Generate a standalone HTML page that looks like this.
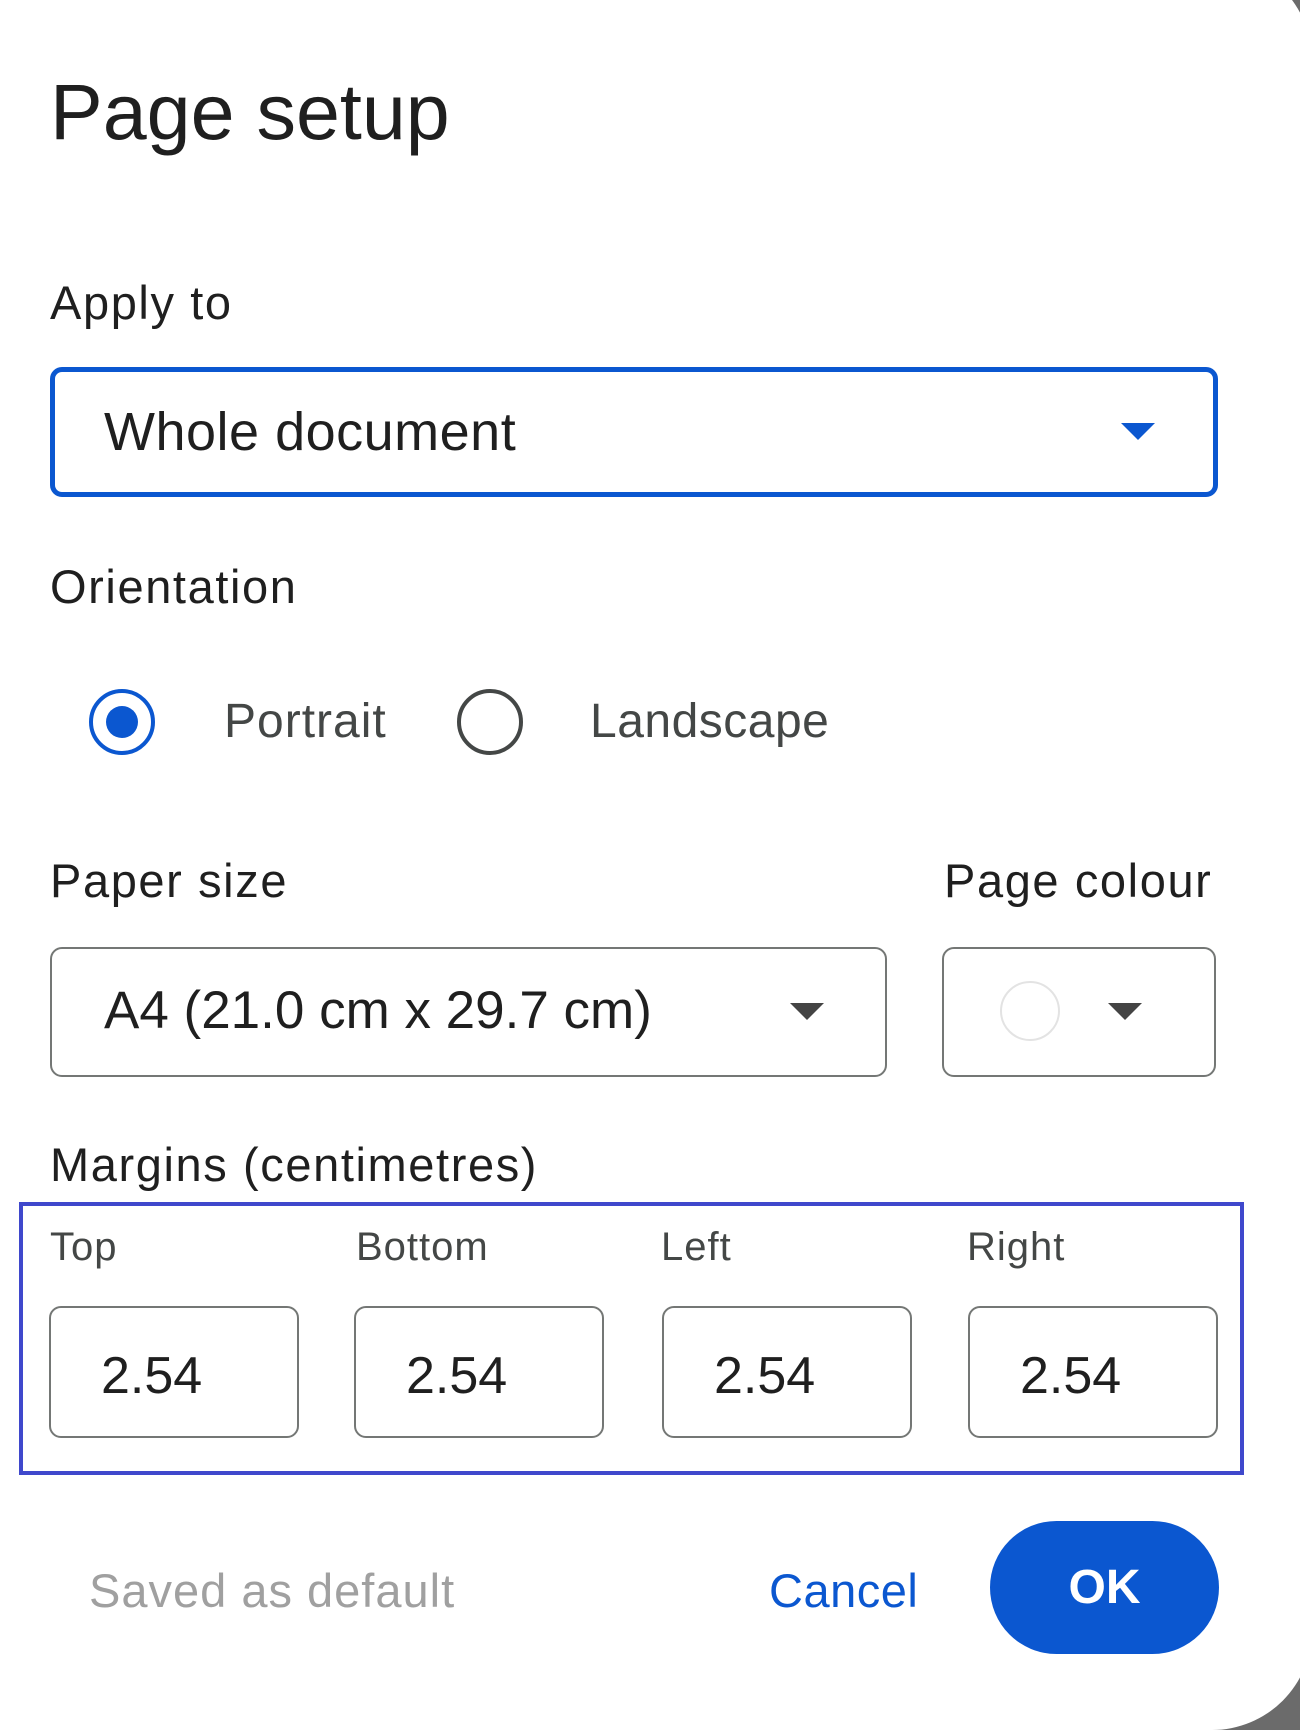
<!DOCTYPE html>
<html><head><style>
body{margin:0;width:1300px;height:1695px;background:#6b6b6b;font-family:"Liberation Sans",Arial,sans-serif;position:relative;overflow:hidden}
.dlg{position:absolute;left:-40px;top:-40px;width:1352px;height:1770px;background:#fff;border-radius:0 100px 100px 0}
.a{position:absolute;white-space:nowrap;color:#1f1f1f}
.lb{letter-spacing:1.6px;font-size:47px}
.sel{position:absolute;box-sizing:border-box;border:2px solid #747775;border-radius:12px;background:#fff}
.tri{position:absolute;width:0;height:0;border-left:17px solid transparent;border-right:17px solid transparent;border-top:17px solid #444}
.inp{position:absolute;top:1306px;width:250px;height:132px;box-sizing:border-box;border:2px solid #747775;border-radius:12px}
.inp span{position:absolute;left:50px;top:38px;font-size:52px;color:#1f1f1f}
.ml{position:absolute;top:1225px;font-size:40px;color:#444746;letter-spacing:1px}
</style></head><body>
<div class="dlg"></div>
<div class="a" style="left:50px;top:66px;font-size:79px">Page setup</div>
<div class="a lb" style="left:50px;top:275px">Apply to</div>
<div class="sel" style="left:50px;top:367px;width:1168px;height:130px;border:5px solid #0b57d0"></div>
<div class="a" style="left:104px;top:401px;font-size:54px;letter-spacing:0.5px">Whole document</div>
<div class="tri" style="left:1121px;top:423px;border-top-color:#0b57d0"></div>
<div class="a lb" style="left:50px;top:559px">Orientation</div>
<div style="position:absolute;left:89px;top:689px;width:58px;height:58px;border:4px solid #0b57d0;border-radius:50%"></div>
<div style="position:absolute;left:106px;top:706px;width:32px;height:32px;background:#0b57d0;border-radius:50%"></div>
<div class="a" style="left:224px;top:694px;font-size:48px;color:#444746;letter-spacing:1px">Portrait</div>
<div style="position:absolute;left:457px;top:689px;width:58px;height:58px;border:4px solid #444746;border-radius:50%"></div>
<div class="a" style="left:590px;top:694px;font-size:48px;color:#444746;letter-spacing:0.5px">Landscape</div>
<div class="a lb" style="left:50px;top:853px">Paper size</div>
<div class="a lb" style="left:944px;top:853px">Page colour</div>
<div class="sel" style="left:50px;top:947px;width:837px;height:130px"></div>
<div class="a" style="left:104px;top:980px;font-size:53px">A4 (21.0 cm x 29.7 cm)</div>
<div class="tri" style="left:790px;top:1003px"></div>
<div class="sel" style="left:942px;top:947px;width:274px;height:130px"></div>
<div style="position:absolute;left:1000px;top:981px;width:56px;height:56px;border:2px solid #e3e3e3;border-radius:50%"></div>
<div class="tri" style="left:1108px;top:1003px"></div>
<div class="a lb" style="left:50px;top:1137px">Margins (centimetres)</div>
<div style="position:absolute;left:19px;top:1202px;width:1225px;height:273px;box-sizing:border-box;border:4px solid #3f48cc"></div>
<div class="ml" style="left:50px">Top</div>
<div class="ml" style="left:356px">Bottom</div>
<div class="ml" style="left:661px">Left</div>
<div class="ml" style="left:967px">Right</div>
<div class="inp" style="left:49px"><span>2.54</span></div>
<div class="inp" style="left:354px"><span>2.54</span></div>
<div class="inp" style="left:662px"><span>2.54</span></div>
<div class="inp" style="left:968px"><span>2.54</span></div>
<div class="a" style="left:89px;top:1563px;font-size:47px;color:#a0a0a0;letter-spacing:1px">Saved as default</div>
<div class="a" style="left:769px;top:1563px;font-size:47px;color:#0b57d0;letter-spacing:0.5px">Cancel</div>
<div style="position:absolute;left:990px;top:1521px;width:229px;height:133px;background:#0b57d0;border-radius:67px;color:#fff;font-size:48px;font-weight:bold;text-align:center;line-height:133px">OK</div>
</body></html>
